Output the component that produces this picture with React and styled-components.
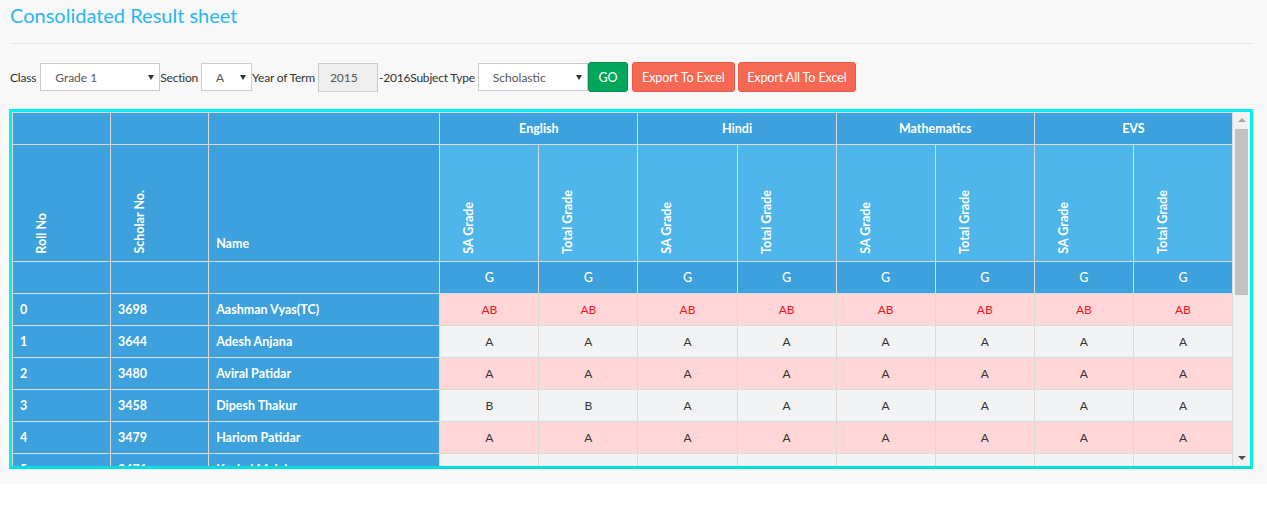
import React from "react";
import styled, { createGlobalStyle } from "styled-components";

const GlobalStyle = createGlobalStyle`
  html, body { margin: 0; padding: 0; background: #fff; }
  body { font-family: Lato, "Open Sans", "Liberation Sans", sans-serif; color: #333; }
  * { box-sizing: border-box; }
`;

const Page = styled.div`
  background: #f8f8f8;
  padding: 0 14px 15px 9px;
`;

const Title = styled.h3`
  margin: 0;
  padding: 1px 0 0 1px;
  font-size: 20px;
  line-height: 28px;
  font-weight: 400;
  color: #29b6f6;
`;

const Divider = styled.hr`
  margin: 14px 0 0 1px;
  border: 0;
  height: 1px;
  background: #e8e8e8;
`;

const FilterBar = styled.div`
  display: flex;
  align-items: center;
  margin-top: 18px;
  padding-left: 1px;
  height: 30px;
  font-size: 12px;
  color: #333;
`;

const Label = styled.span`
  margin-right: ${(p) => (p.$tight ? 0 : p.$wide ? 4 : 3)}px;
  letter-spacing: -0.2px;
  white-space: nowrap;
`;

const SelectWrap = styled.div`
  position: relative;
  width: ${(p) => p.$w}px;
  height: 28px;
`;

const Select = styled.select`
  appearance: none;
  -webkit-appearance: none;
  width: 100%;
  height: 100%;
  border: 1px solid #ccc;
  border-radius: 0;
  background: #fff;
  padding: 0 0 0 14px;
  font-family: inherit;
  font-size: 12px;
  color: #555;
  outline: none;
`;

const Caret = styled.span`
  position: absolute;
  right: 6px;
  top: 12px;
  width: 0;
  height: 0;
  border-left: 3px solid transparent;
  border-right: 3px solid transparent;
  border-top: 5px solid #333;
  pointer-events: none;
`;

const YearInput = styled.input`
  width: 60px;
  height: 29px;
  border: 1px solid #ccc;
  background: #eee;
  padding: 0 0 0 11px;
  font-family: inherit;
  font-size: 12px;
  color: #555;
  margin-right: 1px;
  outline: none;
`;

const Button = styled.button`
  height: 30px;
  width: ${(p) => p.$w}px;
  padding: 0;
  margin-left: ${(p) => p.$ml || 0}px;
  border: 1px solid ${(p) => (p.$variant === "go" ? "#008d4c" : "#e95a48")};
  border-radius: 3px;
  background: ${(p) => (p.$variant === "go" ? "#00a65a" : "#f56954")};
  color: #fff;
  font-family: inherit;
  font-size: 12.5px;
  letter-spacing: -0.1px;
  cursor: pointer;
  white-space: nowrap;
`;

const TableBox = styled.div`
  margin-top: 17px;
  display: flex;
  height: 360px;
  border: 3px solid #00f0f0;
  border-bottom-color: #00dede;
  background: #fff;
`;

const Viewport = styled.div`
  width: 1221px;
  overflow: hidden;
`;

const Table = styled.table`
  width: 1221px;
  border-collapse: collapse;
  table-layout: fixed;
  font-size: 12.5px;
`;

const Th = styled.th`
  height: 32px;
  padding: 0 7px;
  border: 1px solid #dadada;
  background: ${(p) => (p.$light ? "#4fb6ec" : "#3ca1dc")};
  color: #fff;
  font-weight: ${(p) => (p.$normal ? 500 : 700)};
  text-align: center;
  vertical-align: middle;
`;

const TallTh = styled(Th)`
  height: 117px;
  vertical-align: bottom;
  text-align: left;
  padding: 0 0 ${(p) => (p.$rotated ? 4 : 10)}px ${(p) => (p.$rotated ? 22 : 7)}px;
`;

const Vertical = styled.span`
  display: inline-block;
  writing-mode: vertical-rl;
  transform: rotate(180deg);
  line-height: 14px;
  white-space: nowrap;
`;

const Row = styled.tr`
  background: ${(p) => (p.$odd ? "#f2f3f5" : "#ffd7d8")};
`;

const KeyCell = styled.td`
  height: 32px;
  padding: 0 7px;
  border: 1px solid #dadada;
  background: #3ca1dc;
  color: #fff;
  font-weight: 700;
  white-space: nowrap;
  overflow: hidden;
`;

const GradeCell = styled.td`
  height: 32px;
  padding: 0;
  border: 1px solid #dadada;
  text-align: center;
  font-size: 12px;
  color: ${(p) => (p.$absent ? "#f0141e" : "#333")};
`;

const ScrollTrack = styled.div`
  flex: 1;
  background: #f1f1f1;
  display: flex;
  flex-direction: column;
  align-items: center;
  padding: 6px 0 6px;
`;

const ArrowUp = styled.span`
  width: 0;
  height: 0;
  border-left: 4px solid transparent;
  border-right: 4px solid transparent;
  border-bottom: 4px solid #a3a3a3;
`;

const ArrowDown = styled.span`
  width: 0;
  height: 0;
  border-left: 4px solid transparent;
  border-right: 4px solid transparent;
  border-top: 4px solid #505050;
`;

const Thumb = styled.div`
  margin-top: 7px;
  width: 13px;
  height: 166px;
  background: #c1c1c1;
`;

const Spacer = styled.div`
  flex: 1;
`;

const subjects = ["English", "Hindi", "Mathematics", "EVS"];

const allAB = Array(8).fill("AB");
const allA = Array(8).fill("A");
const bb = ["B", "B", "A", "A", "A", "A", "A", "A"];

const students = [
  [0, 3698, "Aashman Vyas(TC)", allAB],
  [1, 3644, "Adesh Anjana", allA],
  [2, 3480, "Aviral Patidar", allA],
  [3, 3458, "Dipesh Thakur", bb],
  [4, 3479, "Hariom Patidar", allA],
  [5, 3471, "Kushal Malviya", bb],
  [6, 3462, "Mahi Patel", allA],
  [7, 3490, "Nandini Sharma", allA],
];

export default function App() {
  return (
    <>
      <GlobalStyle />
      <Page>
        <Title>Consolidated Result sheet</Title>
        <Divider />
        <FilterBar>
          <Label $wide>Class</Label>
          <SelectWrap $w={120}>
            <Select defaultValue="Grade 1">
              <option>Grade 1</option>
            </Select>
            <Caret />
          </SelectWrap>
          <Label>Section</Label>
          <SelectWrap $w={51}>
            <Select defaultValue="A">
              <option>A</option>
            </Select>
            <Caret />
          </SelectWrap>
          <Label>Year of Term</Label>
          <YearInput defaultValue="2015" readOnly />
          <Label $tight>-2016</Label>
          <Label>Subject Type</Label>
          <SelectWrap $w={110}>
            <Select defaultValue="Scholastic">
              <option>Scholastic</option>
            </Select>
            <Caret />
          </SelectWrap>
          <Button $variant="go" $w={40}>GO</Button>
          <Button $ml={4} $w={103}>Export To Excel</Button>
          <Button $ml={3} $w={118}>Export All To Excel</Button>
        </FilterBar>
        <TableBox>
          <Viewport>
            <Table>
              <colgroup>
                <col style={{ width: 98 }} />
                <col style={{ width: 98 }} />
                <col style={{ width: 231 }} />
                {Array.from({ length: 8 }).map((_, i) => (
                  <col key={i} style={{ width: 99 }} />
                ))}
              </colgroup>
              <thead>
                <tr>
                  <Th />
                  <Th />
                  <Th />
                  {subjects.map((s) => (
                    <Th key={s} colSpan={2}>
                      {s}
                    </Th>
                  ))}
                </tr>
                <tr>
                  <TallTh $rotated>
                    <Vertical>Roll No</Vertical>
                  </TallTh>
                  <TallTh $rotated>
                    <Vertical>Scholar No.</Vertical>
                  </TallTh>
                  <TallTh>Name</TallTh>
                  {subjects.map((s) => (
                    <React.Fragment key={s}>
                      <TallTh $rotated $light>
                        <Vertical>SA Grade</Vertical>
                      </TallTh>
                      <TallTh $rotated $light>
                        <Vertical>Total Grade</Vertical>
                      </TallTh>
                    </React.Fragment>
                  ))}
                </tr>
                <tr>
                  <Th />
                  <Th />
                  <Th />
                  {Array.from({ length: 8 }).map((_, i) => (
                    <Th key={i} $normal>
                      G
                    </Th>
                  ))}
                </tr>
              </thead>
              <tbody>
                {students.map(([roll, sch, name, grades], idx) => (
                  <Row key={roll} $odd={idx % 2 === 1}>
                    <KeyCell>{roll}</KeyCell>
                    <KeyCell>{sch}</KeyCell>
                    <KeyCell>{name}</KeyCell>
                    {grades.map((g, i) => (
                      <GradeCell key={i} $absent={g === "AB"}>
                        {g}
                      </GradeCell>
                    ))}
                  </Row>
                ))}
              </tbody>
            </Table>
          </Viewport>
          <ScrollTrack>
            <ArrowUp />
            <Thumb />
            <Spacer />
            <ArrowDown />
          </ScrollTrack>
        </TableBox>
      </Page>
    </>
  );
}
